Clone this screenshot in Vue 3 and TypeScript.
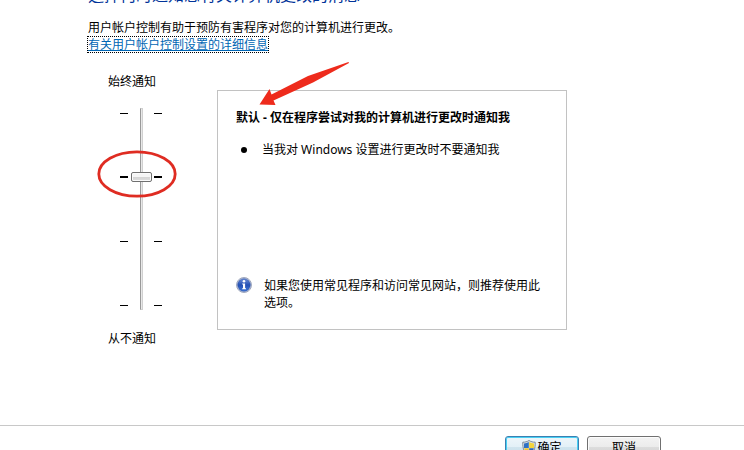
<script setup lang="ts">
import { ref } from 'vue'

interface Level {
  title: string
  items: string[]
  advice: string
}

const level = ref<number>(2)

const current: Level = {
  title: '默认 - 仅在程序尝试对我的计算机进行更改时通知我',
  items: ['当我对 Windows 设置进行更改时不要通知我'],
  advice: '如果您使用常见程序和访问常见网站，则推荐使用此选项。',
}

const ticks: number[] = [3, 2, 1, 0]
</script>

<template>
  <div class="dialog">
    <main class="content">
      <h1 class="title">选择何时通知您有关计算机更改的消息</h1>
      <p class="intro">用户帐户控制有助于预防有害程序对您的计算机进行更改。</p>
      <a class="details" href="#details">有关用户帐户控制设置的详细信息</a>

      <div class="settings">
        <div class="level">
          <label for="level">始终通知</label>
          <div class="scale">
            <div class="ticks">
              <span v-for="t in ticks" :key="t" class="tick" :class="{ active: t === level }"></span>
            </div>
            <input id="level" v-model.number="level" class="slider" type="range" min="0" max="3" step="1" />
            <div class="ticks">
              <span v-for="t in ticks" :key="t" class="tick" :class="{ active: t === level }"></span>
            </div>
            <svg class="ring" width="82" height="50" viewBox="0 0 82 50" aria-hidden="true">
              <ellipse cx="41" cy="25" rx="38.2" ry="22.2" fill="none" stroke="#df2c22" stroke-width="2.8" />
            </svg>
          </div>
          <span>从不通知</span>
        </div>

        <section class="panel">
          <svg class="arrow" width="92" height="46" viewBox="0 0 92 46" aria-hidden="true">
            <path d="M1.5 43.5 L11.5 28 L13.5 33.5 L50 15 L90.5 1 L91 2 L55 21.5 L15.5 39.5 L17.5 44 Z" fill="#ee2b1c" />
          </svg>
          <h2>{{ current.title }}</h2>
          <ul>
            <li v-for="item in current.items" :key="item">{{ item }}</li>
          </ul>
          <div class="advice">
            <svg width="16" height="16" viewBox="0 0 16 16" aria-hidden="true">
              <defs>
                <linearGradient id="info-fill" x1="0" y1="0" x2="0" y2="1">
                  <stop offset="0" stop-color="#6d8fd8" />
                  <stop offset="0.5" stop-color="#2450b4" />
                  <stop offset="1" stop-color="#3f78d8" />
                </linearGradient>
              </defs>
              <circle cx="8" cy="8" r="7.5" fill="#d5dae6" stroke="#8b96b0" stroke-width="0.8" />
              <circle cx="8" cy="8" r="6.3" fill="url(#info-fill)" stroke="#2a4fa6" stroke-width="0.6" />
              <circle cx="8" cy="4.2" r="1.3" fill="#fff" />
              <path d="M6.2 6.5 H9.1 V11.3 H10 V12.3 H6.2 V11.3 H7 V7.5 H6.2 Z" fill="#fff" />
            </svg>
            <p>{{ current.advice }}</p>
          </div>
        </section>
      </div>
    </main>

    <footer class="actions">
      <button class="primary" type="button">
        <svg width="14" height="16" viewBox="0 0 14 16" aria-hidden="true">
          <path d="M7 0.5 C5 1.8 3 2.2 0.8 2.2 C0.5 8 2 13 7 15.5 C12 13 13.5 8 13.2 2.2 C11 2.2 9 1.8 7 0.5 Z" fill="#dfe6ec" stroke="#6f7f8e" stroke-width="0.9" />
          <path d="M6.8 2 C5.4 2.8 3.8 3.3 2 3.4 L2 8 H6.8 Z" fill="#2f72c4" />
          <path d="M7.2 2 C8.6 2.8 10.2 3.3 12 3.4 L12 8 H7.2 Z" fill="#f2d43c" />
          <path d="M2.1 8.2 H6.8 V14.2 C4.2 12.8 2.6 10.8 2.1 8.2 Z" fill="#f0c62c" />
          <path d="M11.9 8.2 H7.2 V14.2 C9.8 12.8 11.4 10.8 11.9 8.2 Z" fill="#2a66b8" />
        </svg>
        <span>确定</span>
      </button>
      <button type="button">取消</button>
    </footer>
  </div>
</template>

<style>
html,
body {
  background: #fff;
  overflow: hidden;
}
</style>

<style scoped>
.dialog {
  display: flow-root;
  color: #000;
  font: 12px/17px "Noto Sans", "Noto Sans CJK SC", sans-serif;
}

.content {
  margin-top: -17px;
  padding: 0 88px;
}

h1,
h2,
p,
ul {
  margin: 0;
  padding: 0;
}

.title {
  color: #003399;
  font-size: 16px;
  font-weight: 400;
  line-height: 24px;
}

.intro {
  margin-top: 12px;
}

.details {
  display: inline-block;
  outline: 1px dotted #000;
  color: #0066b4;
  line-height: 15px;
  vertical-align: top;
  margin-top: 1px;
}

.settings {
  display: flex;
  align-items: flex-start;
  margin-top: 20px;
}

.level {
  display: flex;
  flex-direction: column;
  width: 109px;
  padding-left: 20px;
}

.scale {
  position: relative;
  display: flex;
  justify-content: space-between;
  width: 42px;
  margin: 18px 0 20px 12px;
}

.ticks {
  display: flex;
  flex-direction: column;
  justify-content: space-between;
  width: 8px;
  padding: 4px 0 3px;
}

.tick {
  height: 1px;
  margin: 1px 0;
  background: #000;
}

.tick.active {
  height: 2px;
  margin: 0 0 1px;
}

.slider {
  appearance: none;
  writing-mode: vertical-lr;
  direction: rtl;
  width: 25px;
  height: 202px;
  margin: 0;
  background: transparent;
}

.slider::-webkit-slider-runnable-track {
  width: 3px;
  box-sizing: border-box;
  border: 1px solid #d0d0d0;
  border-left-color: #999;
  background: #e8e8e8;
}

.slider::-webkit-slider-thumb {
  appearance: none;
  box-sizing: border-box;
  width: 21px;
  height: 10px;
  margin-left: -10px;
  border: 1px solid #707070;
  border-radius: 2px;
  background: linear-gradient(#f5f5f5 45%, #d4d4d4 50%, #dedede);
  box-shadow: inset 0 0 0 1px #fafafa;
}

.ring {
  position: absolute;
  top: 41px;
  left: -24px;
  pointer-events: none;
}

.panel {
  position: relative;
  box-sizing: border-box;
  display: flex;
  flex-direction: column;
  flex: 0 1 350px;
  min-height: 240px;
  margin-top: 17px;
  padding: 18px;
  border: 1px solid #c2c2c2;
}

.arrow {
  position: absolute;
  top: -30px;
  left: 40px;
  pointer-events: none;
}

h2 {
  font-size: 12px;
  font-weight: 700;
}

ul {
  margin-top: 15px;
  list-style: none;
}

li {
  display: flex;
  align-items: center;
  gap: 15px;
  padding-left: 5px;
}

li::before {
  content: "";
  width: 6px;
  height: 6px;
  border-radius: 50%;
  background: #000;
}

.advice {
  display: flex;
  gap: 12px;
  margin-top: auto;
  padding-right: 6px;
}

.advice svg {
  flex: none;
}

.actions {
  display: flex;
  justify-content: flex-end;
  gap: 8px;
  margin-top: 78px;
  padding: 10px 83px 10px 0;
  border-top: 1px solid #c8c8c8;
}

button {
  display: flex;
  align-items: center;
  justify-content: center;
  gap: 1px;
  box-sizing: border-box;
  width: 74px;
  height: 23px;
  padding: 0;
  border: 1px solid #707070;
  border-radius: 3px;
  background: linear-gradient(#f3f3f3, #ebebeb 50%, #dcdcdc 50%, #cfcfcf);
  box-shadow: inset 0 0 0 1px #fcfcfc;
  color: #000;
  font: inherit;
}

.primary {
  border-color: #3c7fb1;
  background: linear-gradient(#eef6fa, #e2f0f7 50%, #d0e4ee 50%, #c4dce8);
  box-shadow: inset 0 0 0 1px #48d0f4;
}
</style>
